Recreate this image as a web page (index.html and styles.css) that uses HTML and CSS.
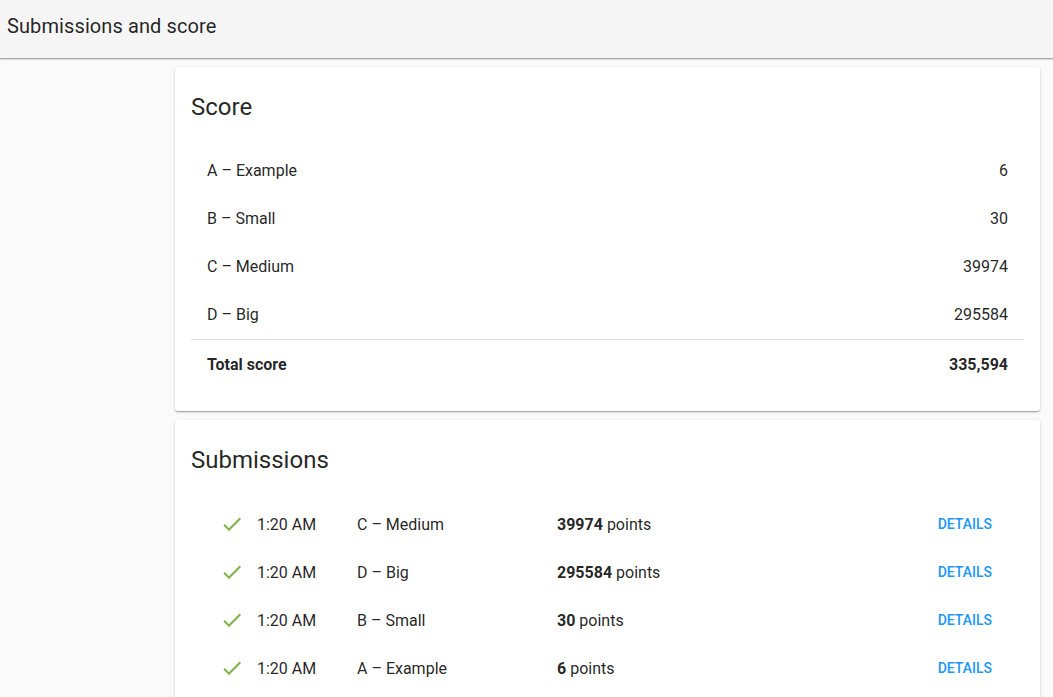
FILE: index.html
```html
<!DOCTYPE html>
<html lang="en">
<head>
<meta charset="utf-8">
<title>Submissions and score</title>
<link rel="stylesheet" href="styles.css">
</head>
<body>
<header class="topbar">
  <h1 class="topbar-title">Submissions and score</h1>
</header>
<main class="content">
  <section class="card">
    <h2 class="card-title">Score</h2>
    <div class="score-list">
      <div class="score-row"><span>A – Example</span><span>6</span></div>
      <div class="score-row"><span>B – Small</span><span>30</span></div>
      <div class="score-row"><span>C – Medium</span><span>39974</span></div>
      <div class="score-row"><span>D – Big</span><span>295584</span></div>
      <div class="score-row total"><span>Total score</span><span>335,594</span></div>
    </div>
  </section>
  <section class="card">
    <h2 class="card-title">Submissions</h2>
    <div class="sub-list">
      <div class="sub-row">
        <svg class="check" viewBox="0 0 24 24" width="24" height="24"><path d="M9 16.17L4.83 12l-1.42 1.41L9 19 21 7l-1.41-1.41z"/></svg>
        <span>1:20 AM</span><span>C – Medium</span><span><b>39974</b> points</span><a class="details" href="#">Details</a>
      </div>
      <div class="sub-row">
        <svg class="check" viewBox="0 0 24 24" width="24" height="24"><path d="M9 16.17L4.83 12l-1.42 1.41L9 19 21 7l-1.41-1.41z"/></svg>
        <span>1:20 AM</span><span>D – Big</span><span><b>295584</b> points</span><a class="details" href="#">Details</a>
      </div>
      <div class="sub-row">
        <svg class="check" viewBox="0 0 24 24" width="24" height="24"><path d="M9 16.17L4.83 12l-1.42 1.41L9 19 21 7l-1.41-1.41z"/></svg>
        <span>1:20 AM</span><span>B – Small</span><span><b>30</b> points</span><a class="details" href="#">Details</a>
      </div>
      <div class="sub-row">
        <svg class="check" viewBox="0 0 24 24" width="24" height="24"><path d="M9 16.17L4.83 12l-1.42 1.41L9 19 21 7l-1.41-1.41z"/></svg>
        <span>1:20 AM</span><span>A – Example</span><span><b>6</b> points</span><a class="details" href="#">Details</a>
      </div>
    </div>
  </section>
</main>
</body>
</html>
```
FILE: styles.css
```css
* { box-sizing: border-box; }
html, body { margin: 0; padding: 0; }
body {
  background: #fafafa;
  font-family: Roboto, "Liberation Sans", Arial, sans-serif;
  color: rgba(0, 0, 0, 0.87);
}
.topbar {
  position: relative;
  z-index: 2;
  height: 58px;
  background: #f5f5f5;
  display: flex;
  align-items: center;
  padding: 0 7px;
  box-shadow: 0 1px 2px rgba(0, 0, 0, 0.3), 0 1px 1px rgba(0, 0, 0, 0.14);
}
.topbar-title {
  margin: 0;
  font-size: 20px;
  font-weight: 400;
  line-height: 28px;
  letter-spacing: 0.1px;
  margin-top: -6px;
}
.content {
  padding: 9px 13px 0 175px;
  display: flex;
  flex-direction: column;
  gap: 9px;
}
.card {
  background: #fff;
  border-radius: 3px;
  padding: 24px 16px;
  box-shadow: 0 1px 3px rgba(0, 0, 0, 0.2), 0 1px 1px rgba(0, 0, 0, 0.14), 0 2px 1px -1px rgba(0, 0, 0, 0.12);
}
.card-title {
  margin: 0;
  font-size: 24px;
  font-weight: 400;
  line-height: 32px;
}
.score-list { margin-top: 23px; }
.score-row {
  height: 48px;
  padding: 0 16px;
  display: flex;
  align-items: center;
  justify-content: space-between;
  font-size: 16px;
}
.score-row.total {
  margin-top: 1px;
  border-top: 1px solid #e0e0e0;
  font-weight: 700;
  height: 48px;
  padding-top: 1px;
}
.sub-list { margin-top: 24px; }
.sub-row {
  height: 48px;
  display: grid;
  grid-template-columns: 37px 100px 200px 1fr auto;
  align-items: center;
  padding: 0 32px 0 29px;
  font-size: 16px;
}
.sub-row b { font-weight: 700; }
.check { fill: #7cb342; display: block; }
.details {
  color: #2196f3;
  text-decoration: none;
  text-transform: uppercase;
  font-size: 14px;
  font-weight: 500;
  letter-spacing: 0;
  margin-top: -1px;
}
```
